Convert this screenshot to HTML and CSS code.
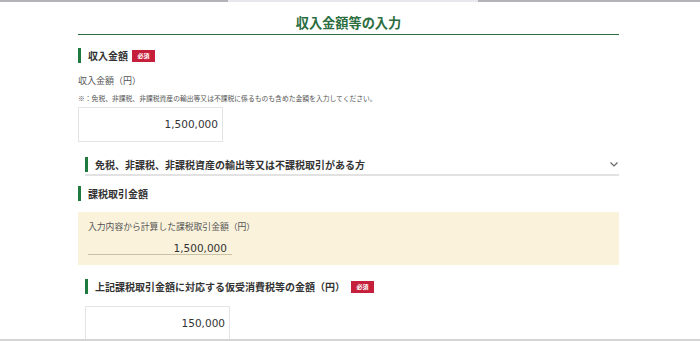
FILE: index.html
```html
<!DOCTYPE html>
<html lang="ja">
  <head>
    <meta charset="UTF-8" />
    <meta name="viewport" content="width=device-width, initial-scale=1.0" />
    <title>収入金額等の入力</title>
    <link rel="stylesheet" href="styles.css">
  </head>
  <body>
    <div class="topbar">
      <span class="seg seg-dark"></span>
      <span class="seg seg-light"></span>
      <span class="seg seg-dark"></span>
    </div>

    <div class="page">
      <h1 class="title">収入金額等の入力</h1>

      <div class="sec-head">
        <span class="bar"></span>
        <span class="sec-text">収入金額</span>
        <span class="badge">必須</span>
      </div>
      <div class="label">収入金額（円）</div>
      <div class="note">※：免税、非課税、非課税資産の輸出等又は不課税に係るものも含めた金額を入力してください。</div>
      <div class="num-input">1,500,000</div>

      <button class="accordion">
        <span class="bar"></span>
        <span class="sec-text">免税、非課税、非課税資産の輸出等又は不課税取引がある方</span>
        <svg class="chevron" width="8" height="5" viewBox="0 0 8 5">
          <polyline points="0.5,0.5 4,4 7.5,0.5" fill="none" stroke="#666" stroke-width="1.2" />
        </svg>
      </button>

      <div class="sec-head sec-gap">
        <span class="bar"></span>
        <span class="sec-text">課税取引金額</span>
      </div>
      <div class="calc-box">
        <div class="calc-label">入力内容から計算した課税取引金額（円）</div>
        <div class="calc-value">1,500,000</div>
      </div>

      <div class="sec-head sub-head">
        <span class="bar"></span>
        <span class="sec-text">上記課税取引金額に対応する仮受消費税等の金額（円）</span>
        <span class="badge badge-far">必須</span>
      </div>
      <div class="num-input sub-input">150,000</div>
    </div>

    <div class="bottom-line"></div>
  </body>
</html>
```

FILE: styles.css
```css
html,
body {
  margin: 0;
  height: 341px;
  overflow: hidden;
}
body {
  font-family: "Noto Sans CJK JP", sans-serif;
  color: #333;
  background: #fff;
}
.topbar {
  display: flex;
  height: 2px;
}
.seg {
  display: block;
  height: 2px;
}
.seg-dark {
  background: #b4b4b8;
  width: 228px;
}
.seg-light {
  background: #e6e8ee;
  width: 250px;
}
.seg-dark:last-child {
  flex: 1;
}
.page {
  width: 541px;
  margin-left: 78px;
  padding-top: 11px;
}
.title {
  margin: 0;
  font-size: 13.2px;
  line-height: 20px;
  font-weight: bold;
  color: #2b6e40;
  text-align: center;
  padding-bottom: 1px;
  border-bottom: 1.5px solid #2b6e40;
}
.sec-head {
  display: flex;
  align-items: center;
  height: 15px;
  margin-top: 13px;
}
.bar {
  display: block;
  width: 3px;
  height: 15px;
  background: #1f7a40;
  margin-right: 7px;
  flex-shrink: 0;
}
.sec-text {
  font-size: 10px;
  font-weight: bold;
  color: #333;
  line-height: 15px;
}
.badge {
  display: inline-block;
  margin-left: 4px;
  width: 23px;
  height: 12px;
  line-height: 12px;
  background: #c51f3b;
  color: #fff;
  font-size: 6px;
  font-weight: bold;
  text-align: center;
}
.label {
  margin-top: 12px;
  font-size: 9px;
  line-height: 12px;
  color: #555;
}
.note {
  margin-top: 6px;
  font-size: 6.8px;
  line-height: 10px;
  color: #555;
  white-space: nowrap;
}
.num-input {
  margin-top: 4px;
  width: 145px;
  height: 35px;
  box-sizing: border-box;
  border: 1px solid #e4e4e4;
  font-family: "DejaVu Sans", sans-serif;
  font-size: 10.5px;
  line-height: 33px;
  text-align: right;
  padding-right: 4px;
  color: #333;
}
.accordion {
  display: flex;
  align-items: center;
  width: 534px;
  margin: 15px 0 0 7px;
  padding: 0 0 2px 0;
  border: none;
  border-bottom: 2px solid #e2e2e2;
  background: none;
  font-family: inherit;
  text-align: left;
  cursor: pointer;
}
.accordion .sec-text {
  flex: 1;
}
.chevron {
  margin-right: 1px;
}
.sec-gap {
  margin-top: 10px;
}
.calc-box {
  margin-top: 11px;
  height: 53px;
  box-sizing: border-box;
  background: #faf2db;
  padding: 10px 0 0 10px;
}
.calc-label {
  font-size: 8.8px;
  line-height: 10px;
  color: #555;
}
.calc-value {
  margin-top: 10px;
  width: 144px;
  box-sizing: border-box;
  padding-right: 5px;
  font-family: "DejaVu Sans", sans-serif;
  font-size: 10.5px;
  line-height: 12px;
  text-align: right;
  border-bottom: 1px solid #c9c0a6;
  color: #333;
}
.sub-head {
  margin: 14px 0 0 7px;
}
.badge-far {
  margin-left: 6px;
}
.sub-input {
  margin: 12px 0 0 7px;
}
.bottom-line {
  position: fixed;
  left: 0;
  right: 0;
  bottom: 0;
  height: 2px;
  background: #d4d4d4;
}
```
